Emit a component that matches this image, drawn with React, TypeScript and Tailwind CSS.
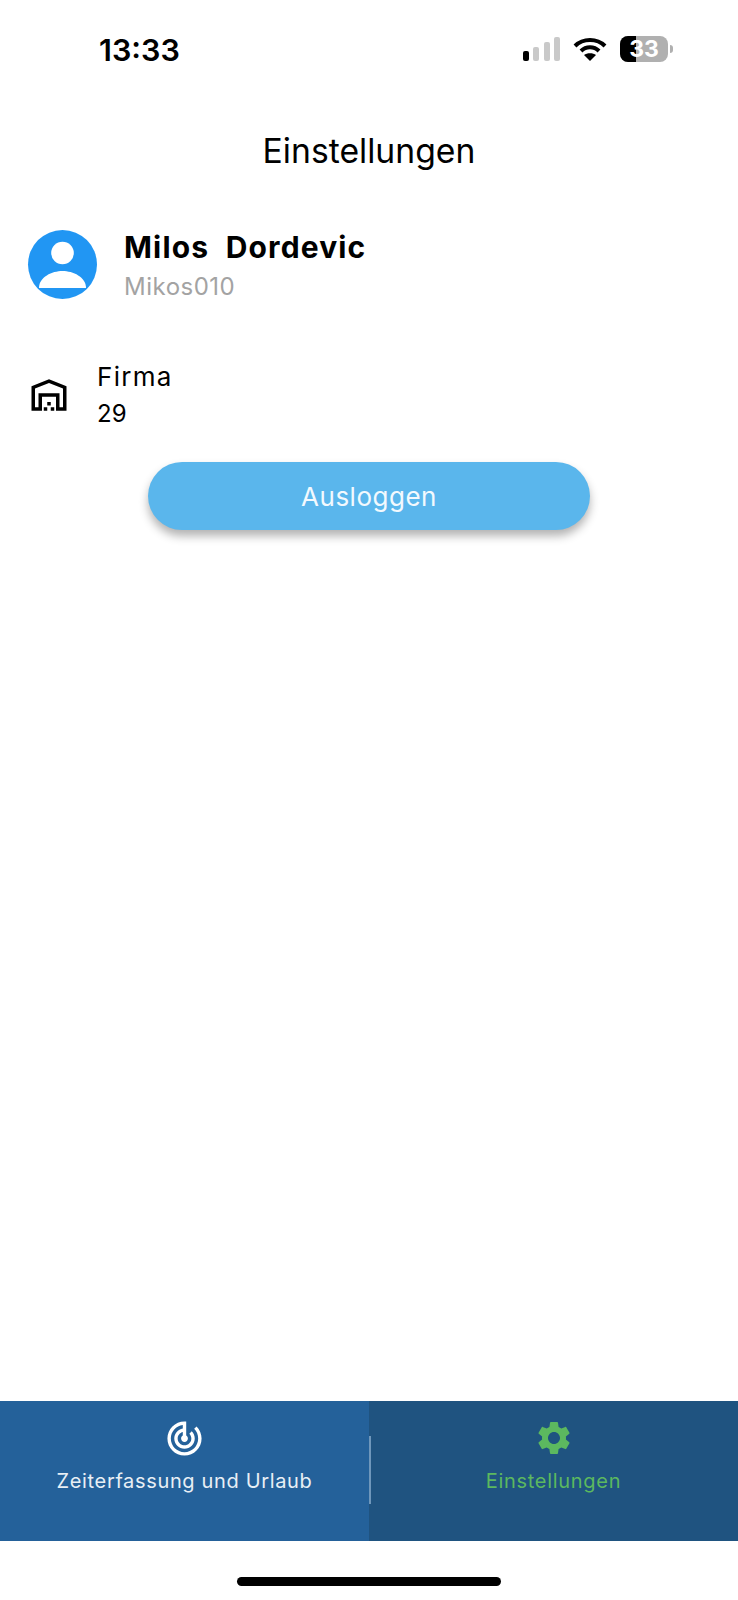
import React from "react";

const font = { fontFamily: "Inter, sans-serif" };

const StatusIcons = () => (
  <div className="mt-[4px] flex items-center">
    <svg width="38" height="24" viewBox="0 0 38 24" className="mr-[12px]">
      <rect x="0" y="14" width="6" height="10" rx="2" fill="#000" />
      <rect x="10" y="10" width="6" height="14" rx="2" fill="#c9c9c9" />
      <rect x="21" y="5" width="6" height="19" rx="2" fill="#c9c9c9" />
      <rect x="31" y="0" width="6" height="24" rx="2" fill="#c9c9c9" />
    </svg>
    <svg width="34" height="24" viewBox="0 0 34 24" className="mr-[13px]" fill="none" stroke="#000" strokeWidth="4">
      <path d="M2 9 C10 1 24 1 32 9" />
      <path d="M8 14 C13 9 21 9 26 14" />
      <path d="M17 24 L11 18 C14 15.500 20 15.500 23 18 Z" fill="#000" stroke="none" />
    </svg>
    <div className="relative flex h-[26px] w-[48px] items-center justify-center overflow-hidden rounded-[8px] bg-[#b0b0b0]">
      <div className="absolute inset-y-0 left-0 w-[16px] bg-black" />
      <span className="relative text-[23px] font-bold leading-none text-white" style={font}>33</span>
    </div>
    <div className="ml-[2px] h-[8px] w-[3px] rounded-r-full bg-[#b0b0b0]" />
  </div>
);

const Warehouse = () => (
  <svg width="42" height="42" viewBox="0 0 24 24" fill="#000">
    <path d="M20 8.35V19h-2v-8H6v8H4V8.35l8-3.2 8 3.2M22 21V7L12 3 2 7v14h6v-8h8v8h6zm-11-2H9v2h2v-2zm2-3h-2v2h2v-2zm2 3h-2v2h2v-2z" />
  </svg>
);

const TrackChanges = () => (
  <svg width="41" height="41" viewBox="0 0 24 24" fill="#fff">
    <path d="M19.07 4.930l-1.410 1.410C19.100 7.790 20 9.790 20 12c0 4.420-3.580 8-8 8s-8-3.580-8-8c0-4.080 3.050-7.440 7-7.930v2.020C8.160 6.570 6 9.030 6 12c0 3.310 2.690 6 6 6s6-2.690 6-6c0-1.660-.67-3.160-1.760-4.240l-1.410 1.410C15.550 9.900 16 10.900 16 12c0 2.210-1.790 4-4 4s-4-1.790-4-4c0-1.860 1.280-3.410 3-3.860v2.140c-.6.35-1 .98-1 1.720 0 1.100.9 2 2 2s2-.9 2-2c0-.74-.4-1.380-1-1.720V2h-1C6.480 2 2 6.480 2 12s4.480 10 10 10 10-4.480 10-10c0-2.760-1.120-5.260-2.930-7.070z" />
  </svg>
);

const Gear = () => (
  <svg width="40" height="40" viewBox="0 0 24 24" fill="#5cb85f">
    <path d="M19.140 12.940c.04-.3.06-.61.06-.94 0-.32-.02-.64-.07-.94l2.030-1.580c.18-.14.23-.41.12-.61l-1.920-3.320c-.12-.22-.37-.29-.59-.22l-2.390.96c-.5-.38-1.030-.7-1.620-.94l-.36-2.540c-.04-.24-.24-.41-.48-.41h-3.840c-.24 0-.43.17-.47.41l-.36 2.540c-.59.24-1.130.57-1.620.94l-2.390-.96c-.22-.08-.47 0-.59.22L2.740 8.870c-.12.21-.08.47.12.61l2.030 1.580c-.05.3-.09.63-.09.94s.02.64.07.94l-2.030 1.580c-.18.14-.23.41-.12.61l1.920 3.320c.12.22.37.29.59.22l2.390-.96c.5.38 1.030.7 1.620.94l.36 2.540c.05.24.24.41.48.41h3.840c.24 0 .44-.17.47-.41l.36-2.540c.59-.24 1.130-.56 1.620-.94l2.390.96c.22.08.47 0 .59-.22l1.920-3.320c.12-.22.07-.47-.12-.61l-2.010-1.580zM12 15.600c-1.980 0-3.600-1.620-3.600-3.600s1.620-3.600 3.600-3.600 3.600 1.620 3.600 3.600-1.620 3.600-3.600 3.600z" />
  </svg>
);

const App = () => {
  return (
    <div className="relative flex h-[1600px] flex-col bg-white" style={font}>
      {/* status bar */}
      <div className="flex h-[68px] items-start justify-between pl-[99px] pr-[65px] pt-[32px]">
        <span className="text-[30.500px] font-semibold leading-[36px] text-black">13:33</span>
        <StatusIcons />
      </div>

      {/* title */}
      <h1 className="mt-[61px] text-center text-[33.700px] font-normal leading-[44px] text-black">Einstellungen</h1>

      {/* user */}
      <div className="mt-[54px] flex items-center pl-[28px]">
        <div className="h-[69px] w-[69px] rounded-full bg-[#2196f3]">
          <svg width="69" height="69" viewBox="0 0 69 69" fill="#fff">
            <circle cx="34.500" cy="23" r="11.300" />
            <path d="M11 58 C11 47 24 41 34.500 41 C45 41 58 47 58 58 Z" />
          </svg>
        </div>
        <div className="ml-[27px] mt-[2px]">
          <div className="whitespace-pre text-[30px] font-bold leading-[36px] tracking-[1.150px] text-black">Milos  Dordevic</div>
          <div className="mt-[7px] text-[24px] leading-[30px] tracking-[0.5px] text-[#a3a3a3]">Mikos010</div>
        </div>
      </div>

      {/* firma */}
      <div className="mt-[56px] flex items-center pl-[28px]">
        <Warehouse />
        <div className="ml-[27px]">
          <div className="text-[26px] leading-[37px] tracking-[1.300px] text-black">Firma</div>
          <div className="mt-[1px] text-[24px] leading-[36px] text-black">29</div>
        </div>
      </div>

      <button className="mx-auto mt-[30px] flex h-[68px] w-[442px] items-center justify-center rounded-full bg-[#5ab6ec] text-[26px] tracking-[0.5px] text-[#f2f9fe] shadow-[0_6px_10px_rgba(0,0,0,0.3)]">
        Ausloggen
      </button>

      {/* tab bar */}
      <div className="mt-auto mb-[59px] flex h-[140px]">
        <div className="flex w-[369px] flex-col items-center bg-[#24619a] pt-[17px]">
          <TrackChanges />
          <span className="mt-[7px] text-[20px] leading-[30px] tracking-[0.650px] text-[#e8eff5]">Zeiterfassung und Urlaub</span>
        </div>
        <div className="relative flex flex-1 flex-col items-center bg-[#1f5380] pt-[17px]">
          <div className="absolute left-0 top-[35px] h-[68px] w-[2px] bg-[#6f97bb]" />
          <Gear />
          <span className="mt-[8px] text-[20px] leading-[30px] tracking-[0.700px] text-[#5cb85f]">Einstellungen</span>
        </div>
      </div>

      {/* home indicator */}
      <div className="absolute left-[237px] top-[1577px] h-[9px] w-[264px] rounded-full bg-black" />
    </div>
  );
};

export default App;
